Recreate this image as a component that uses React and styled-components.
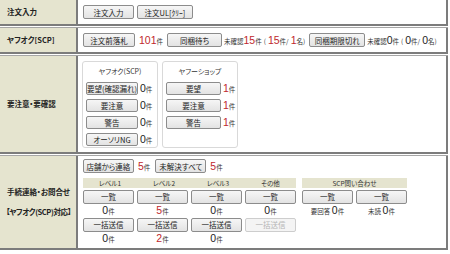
import React from "react";
import styled, { createGlobalStyle } from "styled-components";

const Global = createGlobalStyle`
  html, body { margin: 0; padding: 0; background: #fff; }
  body {
    font-family: "Noto Sans CJK JP", "Noto Sans", sans-serif;
    color: #222;
    font-feature-settings: "palt";
  }
  button { font-feature-settings: "palt"; }
  * { box-sizing: border-box; }
`;

const Table = styled.div`
  width: 448px;
  display: flex;
  flex-direction: column;
  gap: 1px;
`;

const Row = styled.div`
  display: grid;
  grid-template-columns: 78px 1fr;
  height: ${(p) => p.$h}px;
  border-top: ${(p) => (p.$first ? "none" : "1px solid #a6a6a6")};
  border-bottom: 2px solid #7c7c7c;
`;

const Label = styled.div`
  background: #e5e4cf;
  border-right: 2px solid #7c7c7c;
  display: flex;
  flex-direction: column;
  justify-content: center;
  gap: ${(p) => p.$gap || 0}px;
  padding-left: 7px;
  font-size: 7.5px;
  font-weight: bold;
  color: #222;
  line-height: 10px;
  white-space: nowrap;
  overflow: hidden;
`;

const LabelLine = styled.span`
  letter-spacing: ${(p) => p.$ls || 0}px;
  margin-left: ${(p) => p.$ml || 0}px;
`;

const Body = styled.div`
  border-right: 2px solid #7c7c7c;
  padding: ${(p) => p.$pad || "0 0 0 5px"};
  display: flex;
  flex-direction: ${(p) => (p.$col ? "column" : "row")};
  align-items: ${(p) => (p.$col ? "flex-start" : "center")};
  gap: ${(p) => p.$gap || 0}px;
`;

const Btn = styled.button`
  width: ${(p) => p.$w || 51}px;
  height: ${(p) => p.$h || 14}px;
  padding: 0;
  margin: 0 0 0 ${(p) => p.$ml || 0}px;
  border: 1px solid ${(p) => (p.disabled ? "#cdcdcd" : "#8c8c8c")};
  border-radius: 2px;
  background: ${(p) => (p.disabled ? "#f4f4f4" : "linear-gradient(#f6f6f6, #e3e3e3)")};
  color: ${(p) => (p.disabled ? "#b4b4b4" : "#222")};
  font-family: "Noto Sans CJK JP", sans-serif;
  font-size: 7.5px;
  line-height: 11px;
  white-space: nowrap;
  overflow: hidden;
  flex: none;
`;

const Line = styled.div`
  display: flex;
  align-items: center;
  white-space: nowrap;
`;

const Num = styled.span`
  font-family: "Liberation Sans", Arial, sans-serif;
  font-size: 10.5px;
  color: ${(p) => (p.$red ? "#c0272d" : "#222")};
  line-height: 12px;
  margin-left: ${(p) => p.$ml || 0}px;
`;

const Small = styled.span`
  font-size: 6.5px;
  color: #333;
  line-height: 12px;
  margin-left: ${(p) => p.$ml || 0}px;
`;

const CountWrap = styled.span`
  display: inline-flex;
  align-items: baseline;
  margin-left: ${(p) => p.$ml || 0}px;
  white-space: nowrap;
`;

const Count = ({ n, red, pre, ml }) => (
  <CountWrap $ml={ml}>
    {pre && <Small>{pre}&nbsp;</Small>}
    <Num $red={red}>{n}</Num>
    <Small>件</Small>
  </CountWrap>
);

const Summary = ({ a, b, c, red }) => (
  <CountWrap $ml={2}>
    <Small>未確認</Small>
    <Num $red={red}>{a}</Num>
    <Small>件</Small>
    <Small $ml={2}>(</Small>
    <Num $red={red} $ml={2}>{b}</Num>
    <Small>件/</Small>
    <Num $red={red} $ml={2}>{c}</Num>
    <Small>名)</Small>
  </CountWrap>
);

const Panels = styled.div`
  display: flex;
  gap: 4px;
`;

const Panel = styled.div`
  width: 76px;
  height: 87px;
  border: 1px solid #d9d9d9;
  border-radius: 3px;
  padding: 4px 0 0 3px;
  display: flex;
  flex-direction: column;
  gap: 4px;
`;

const PanelTitle = styled.div`
  font-size: 7px;
  color: #333;
  text-align: center;
  padding-right: 3px;
  line-height: 11px;
  margin-bottom: 1px;
`;

const PanelItem = styled.div`
  display: flex;
  align-items: center;
  gap: 2px;
  height: 13px;
`;

const Grid = styled.div`
  display: grid;
  grid-template-columns: repeat(4, 51px) 0px repeat(2, 51px);
  column-gap: 3px;
  align-items: center;
`;

const Head = styled.div`
  background: #e5e4cf;
  font-size: 6.5px;
  color: #333;
  text-align: center;
  height: 10px;
  line-height: 10px;
  grid-column: ${(p) => p.$span || "auto"};
  margin-right: ${(p) => (p.$join ? "-3px" : "0")};
`;

const Cell = styled.div`
  display: flex;
  justify-content: center;
  align-items: center;
  height: ${(p) => p.$h || 14}px;
`;

const Spacer = styled.div``;

export default function App() {
  return (
    <>
      <Global />
      <Table>
        <Row $h={26} $first>
          <Label>注文入力</Label>
          <Body>
            <Btn $w={51}>注文入力</Btn>
            <Btn $w={56} $ml={3}>注文UL[ｸﾘｰ]</Btn>
          </Body>
        </Row>
        <Row $h={27}>
          <Label>ヤフオク[SCP]</Label>
          <Body>
            <Line>
              <Btn $w={52}>注文前落札</Btn>
              <Count n="101" red ml={4} />
              <Btn $w={55} $ml={4}>同梱待ち</Btn>
              <Summary a="15" b="15" c="1" red />
              <Btn $w={56} $ml={4}>同梱期限切れ</Btn>
              <Summary a="0" b="0" c="0" />
            </Line>
          </Body>
        </Row>
        <Row $h={99}>
          <Label>要注意・要確認</Label>
          <Body $pad="5px 0 0 4px" style={{ alignItems: "flex-start" }}>
            <Panels>
              <Panel>
                <PanelTitle>ヤフオク(SCP)</PanelTitle>
                <PanelItem><Btn $w={52} $h={13}>要望(確認漏れ)</Btn><Count n="0" /></PanelItem>
                <PanelItem><Btn $w={52} $h={13}>要注意</Btn><Count n="0" /></PanelItem>
                <PanelItem><Btn $w={52} $h={13}>警告</Btn><Count n="0" /></PanelItem>
                <PanelItem><Btn $w={52} $h={13}>オーソリNG</Btn><Count n="0" /></PanelItem>
              </Panel>
              <Panel>
                <PanelTitle>ヤフーショップ</PanelTitle>
                <PanelItem><Btn $w={55} $h={13}>要望</Btn><Count n="1" red /></PanelItem>
                <PanelItem><Btn $w={55} $h={13}>要注意</Btn><Count n="1" red /></PanelItem>
                <PanelItem><Btn $w={55} $h={13}>警告</Btn><Count n="1" red /></PanelItem>
              </Panel>
            </Panels>
          </Body>
        </Row>
        <Row $h={95}>
          <Label $gap={10}>
            <LabelLine>手続連絡・お問合せ</LabelLine>
            <LabelLine $ls={-0.4} $ml={-1}>【ヤフオク(SCP)対応】</LabelLine>
          </Label>
          <Body $col $pad="3px 0 0 5px" $gap={5}>
            <Line>
              <Btn $w={51}>店舗から連絡</Btn>
              <Count n="5" red ml={4} />
              <Btn $w={51} $ml={5}>未解決すべて</Btn>
              <Count n="5" red ml={4} />
            </Line>
            <Grid>
              <Head $join>レベル1</Head>
              <Head $join>レベル2</Head>
              <Head $join>レベル3</Head>
              <Head>その他</Head>
              <Spacer />
              <Head $span="span 2">SCP問い合わせ</Head>

              <Cell $h={17}><Btn>一覧</Btn></Cell>
              <Cell $h={17}><Btn>一覧</Btn></Cell>
              <Cell $h={17}><Btn>一覧</Btn></Cell>
              <Cell $h={17}><Btn>一覧</Btn></Cell>
              <Spacer />
              <Cell $h={17}><Btn>一覧</Btn></Cell>
              <Cell $h={17}><Btn>一覧</Btn></Cell>

              <Cell $h={11}><Count n="0" /></Cell>
              <Cell $h={11}><Count n="5" red /></Cell>
              <Cell $h={11}><Count n="0" /></Cell>
              <Cell $h={11}><Count n="0" /></Cell>
              <Spacer />
              <Cell $h={11}><Count n="0" pre="要回答" /></Cell>
              <Cell $h={11}><Count n="0" pre="未読" /></Cell>

              <Cell $h={17}><Btn>一括送信</Btn></Cell>
              <Cell $h={17}><Btn>一括送信</Btn></Cell>
              <Cell $h={17}><Btn>一括送信</Btn></Cell>
              <Cell $h={17}><Btn disabled>一括送信</Btn></Cell>
              <Spacer />
              <Cell $h={17} />
              <Cell $h={17} />

              <Cell $h={11}><Count n="0" /></Cell>
              <Cell $h={11}><Count n="2" red /></Cell>
              <Cell $h={11}><Count n="0" /></Cell>
            </Grid>
          </Body>
        </Row>
      </Table>
    </>
  );
}
